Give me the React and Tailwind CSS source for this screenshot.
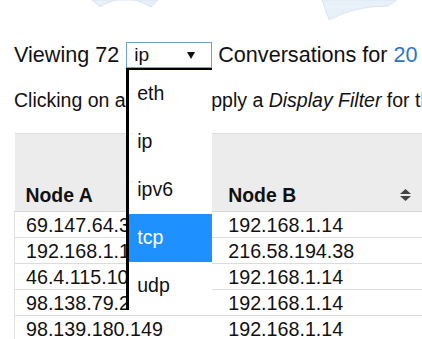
import React from 'react';

const rows = [
  ['69.147.64.34', '192.168.1.14'],
  ['192.168.1.14', '216.58.194.38'],
  ['46.4.115.100', '192.168.1.14'],
  ['98.138.79.23', '192.168.1.14'],
  ['98.139.180.149', '192.168.1.14'],
];

const options = ['eth', 'ip', 'ipv6', 'tcp', 'udp'];

const SortIcon = () => (
  <svg width="11" height="12" viewBox="0 0 11 12" className="shrink-0">
    <path d="M5.5 0 L11 5 L0 5 Z" fill="#444" />
    <path d="M0 7 L11 7 L5.5 12 Z" fill="#444" />
  </svg>
);

export default function App() {
  return (
    <div className="relative w-[422px] h-[339px] overflow-hidden bg-white text-[#111] font-['Liberation_Sans',Arial,sans-serif]">
      <svg className="absolute top-0 left-0" width="422" height="30" viewBox="0 0 422 30">
        <path d="M92 0 L100 7 Q125 -9 151 7 L158 0 Z" fill="#e8f0f9" stroke="#dbe5f0" strokeWidth="1" />
        <path d="M322 0 L329 20 Q354 6 388 6 L397 0 Z" fill="#e8f0f9" stroke="#dbe5f0" strokeWidth="1" />
      </svg>

      <div className="relative pt-[42px] pl-[14px]">
        <div className="flex items-center h-[26px] text-[21.6px] whitespace-nowrap">
          <span>Viewing 72</span>
          <div className="relative ml-[7px] z-10">
            <div className="w-[86px] h-[26px] border border-[#6f9fd8] flex items-center justify-between pl-[7px] pr-[16px] text-[19.2px]">
              <span>ip</span>
              <svg width="8" height="7" viewBox="0 0 8 7">
                <path d="M0 0 L8 0 L4 7 Z" fill="#111" />
              </svg>
            </div>
            <div className="absolute left-0 top-full w-[86px] bg-white border-t-2 border-l-[3px] border-black">
              {options.map((o) => (
                <div
                  key={o}
                  className={`h-[48px] flex items-center pl-[8px] text-[19.5px] ${o === 'tcp' ? 'bg-[#1e90ff] text-white' : ''}`}
                >
                  {o}
                </div>
              ))}
            </div>
          </div>
          <span className="ml-[6px]">
            Conversations for <span className="text-[#2a76c6]">20 seconds</span>
          </span>
        </div>

        <p className="mt-[21px] leading-[22px] text-[19.5px] whitespace-nowrap">
          Clicking on a row will apply a <i>Display Filter</i> for that conversation.
        </p>

        <table className="mt-[22px] border-collapse text-[19.7px] leading-[22px]">
          <thead>
            <tr className="bg-[#ececec] border-t border-[#dcdcdc]">
              <th className="w-[203px] h-[78px] align-bottom text-left font-bold text-[19.4px] pl-[11px] pb-[5px] border-b border-[#d6d6d6]">
                <div className="flex items-center justify-between pr-[11px]">
                  <span>Node A</span>
                  <SortIcon />
                </div>
              </th>
              <th className="w-[205px] h-[78px] align-bottom text-left font-bold text-[19.4px] pl-[11px] pb-[5px] border-b border-[#d6d6d6]">
                <div className="flex items-center justify-between pr-[11px]">
                  <span>Node B</span>
                  <SortIcon />
                </div>
              </th>
            </tr>
          </thead>
          <tbody>
            {rows.map(([a, b], i) => (
              <tr key={i} className="border-b border-[#dcdcdc] h-[26px]">
                <td className="pl-[11px] py-0 border-l border-[#e2e2e2]">{a}</td>
                <td className="pl-[11px] py-0">{b}</td>
              </tr>
            ))}
          </tbody>
        </table>
      </div>
    </div>
  );
}
